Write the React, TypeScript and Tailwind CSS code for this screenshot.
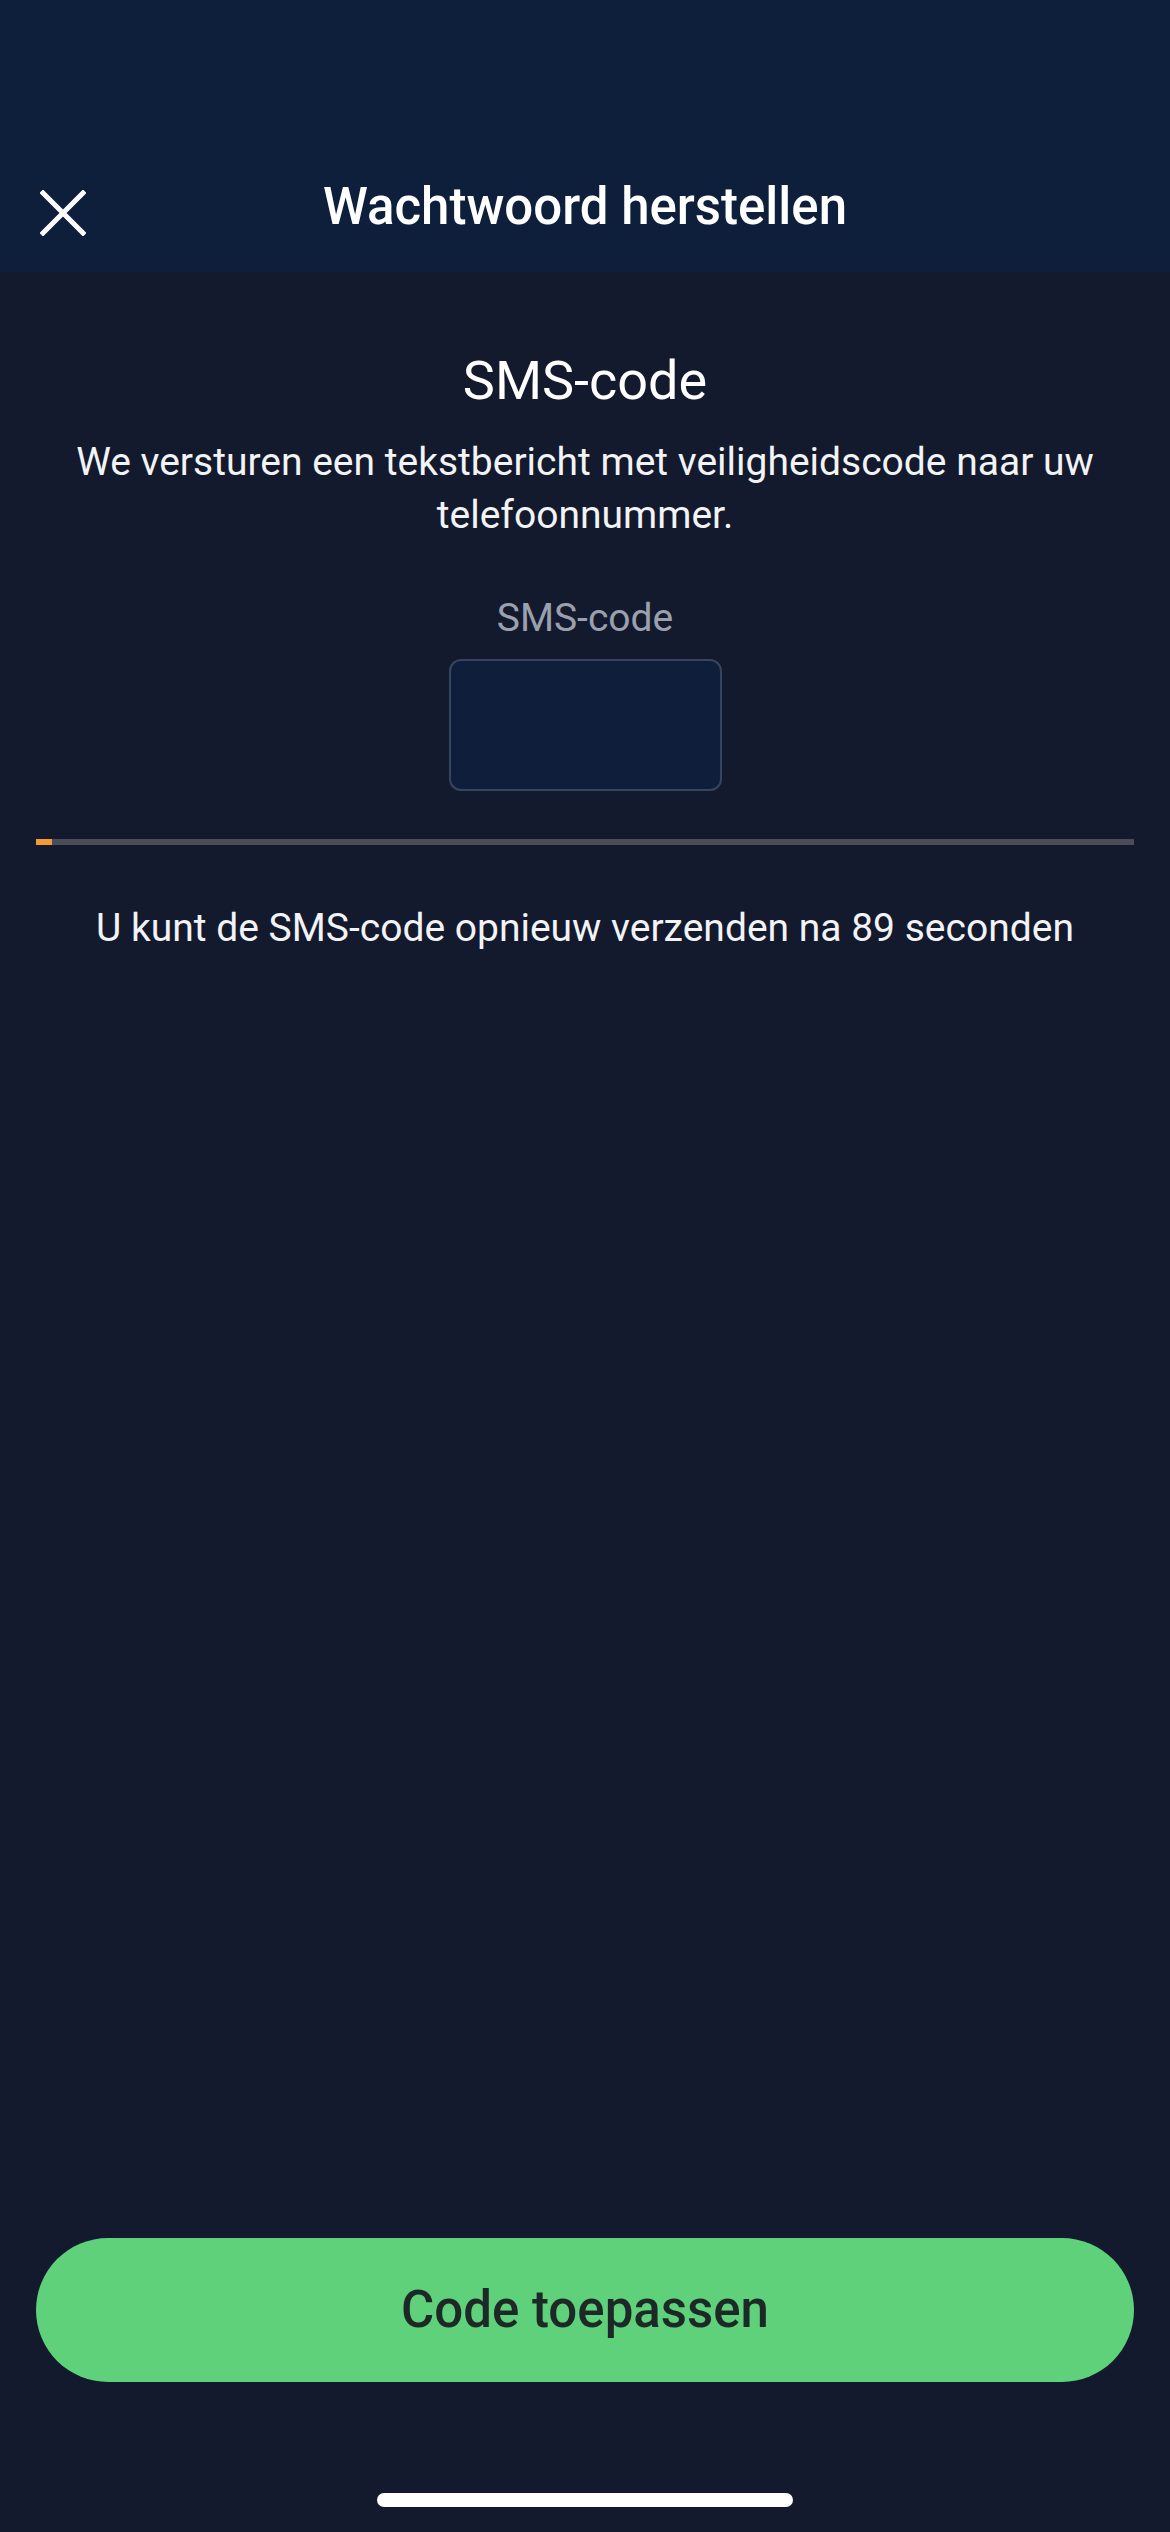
import React from 'react';

const font = { fontFamily: 'Roboto, "Noto Sans", sans-serif' };

export default function App() {
  const progress = 1.5;

  return (
    <div className="min-h-[2532px] w-[1170px] flex flex-col bg-[#131a2e] text-white" style={font}>
      <header className="bg-[#0e1f3b] pt-[141px]">
        <div className="relative h-[131px] flex items-center justify-center">
          <button className="absolute left-[40px] top-[49px] w-[46px] h-[46px]" aria-label="Sluiten">
            <svg viewBox="0 0 46 46" className="w-full h-full">
              <path d="M3 3 L43 43 M43 3 L3 43" stroke="#ffffff" strokeWidth="5" strokeLinecap="square" />
            </svg>
          </button>
          <h1 className="text-[51px] leading-[60px] font-medium">Wachtwoord herstellen</h1>
        </div>
      </header>

      <main className="flex-1 flex flex-col items-center px-[36px] pt-[77px]">
        <h2 className="text-[54px] leading-[64px] font-normal">SMS-code</h2>
        <p className="mt-[23px] text-[39px] leading-[53px] text-center text-[#f2f3f5] px-[10px]">
          We versturen een tekstbericht met veiligheidscode naar uw telefoonnummer.
        </p>

        <label className="mt-[53px] text-[39px] leading-[46px] text-[#9aa0ae]">SMS-code</label>
        <div className="mt-[18px] w-[273px] h-[132px] rounded-[12px] border-2 border-[#36455f] bg-[#0f1f3b]" />

        <div className="mt-[48px] w-full h-[6px] bg-[#4a4d57]">
          <div className="h-full bg-[#f39a35]" style={{ width: `${progress}%` }} />
        </div>

        <p className="mt-[60px] text-[39px] leading-[46px] text-[#f2f3f5]">
          U kunt de SMS-code opnieuw verzenden na 89 seconden
        </p>

        <div className="flex-1" />

        <button className="w-full h-[144px] rounded-full bg-[#5fd17b] text-[51px] font-medium text-[#1d2926]">
          Code toepassen
        </button>

        <div className="mt-[111px] mb-[25px] w-[416px] h-[14px] rounded-full bg-white" />
      </main>
    </div>
  );
}
